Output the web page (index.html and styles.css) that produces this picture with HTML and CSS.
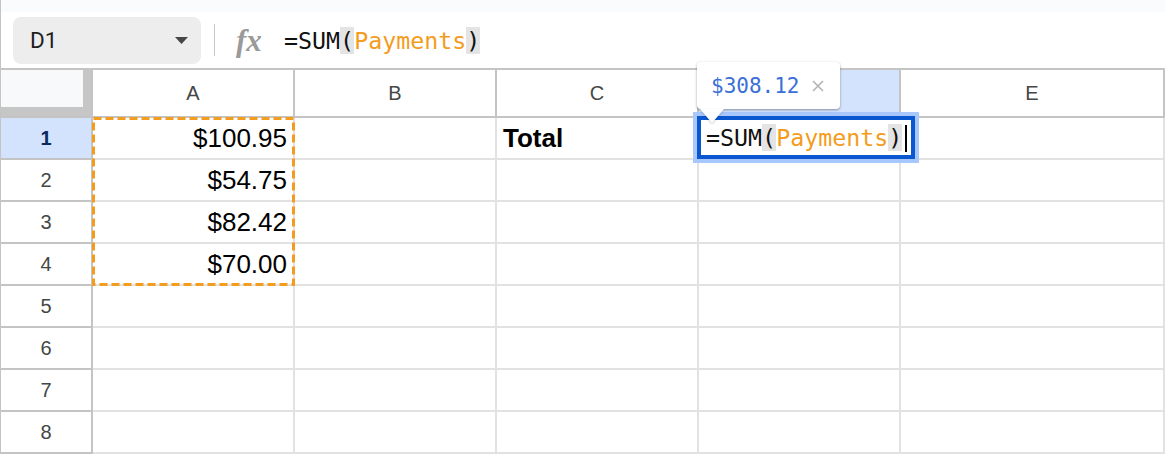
FILE: index.html
```html
<!DOCTYPE html>
<html>
<head>
<meta charset="utf-8">
<link rel="stylesheet" href="styles.css">
</head>
<body>
<div class="app">
  <div class="topstrip"></div>
  <div class="toolbar">
    <div class="namebox">
      <span class="ref">D1</span>
      <svg class="caret" width="13" height="7" viewBox="0 0 13 7"><path d="M0 0h13L6.5 7z" fill="#444746"/></svg>
    </div>
    <div class="sep"></div>
    <span class="fx">fx</span>
    <div class="formula"><span>=SUM</span><span class="paren">(</span><span class="rng">Payments</span><span class="paren">)</span></div>
  </div>
  <div class="sheet">
    <div class="grid">
      <div class="corner"><div class="corner-inner"></div></div>
      <div class="colhead">A</div>
      <div class="colhead">B</div>
      <div class="colhead">C</div>
      <div class="colhead active"></div>
      <div class="colhead">E</div>

      <div class="rowhead active">1</div>
      <div class="cell num">$100.95</div>
      <div class="cell"></div>
      <div class="cell bold">Total</div>
      <div class="cell"></div>
      <div class="cell"></div>

      <div class="rowhead">2</div>
      <div class="cell num">$54.75</div>
      <div class="cell"></div>
      <div class="cell"></div>
      <div class="cell"></div>
      <div class="cell"></div>

      <div class="rowhead">3</div>
      <div class="cell num">$82.42</div>
      <div class="cell"></div>
      <div class="cell"></div>
      <div class="cell"></div>
      <div class="cell"></div>

      <div class="rowhead">4</div>
      <div class="cell num">$70.00</div>
      <div class="cell"></div>
      <div class="cell"></div>
      <div class="cell"></div>
      <div class="cell"></div>

      <div class="rowhead">5</div>
      <div class="cell"></div>
      <div class="cell"></div>
      <div class="cell"></div>
      <div class="cell"></div>
      <div class="cell"></div>

      <div class="rowhead">6</div>
      <div class="cell"></div>
      <div class="cell"></div>
      <div class="cell"></div>
      <div class="cell"></div>
      <div class="cell"></div>

      <div class="rowhead">7</div>
      <div class="cell"></div>
      <div class="cell"></div>
      <div class="cell"></div>
      <div class="cell"></div>
      <div class="cell"></div>

      <div class="rowhead">8</div>
      <div class="cell"></div>
      <div class="cell"></div>
      <div class="cell"></div>
      <div class="cell"></div>
      <div class="cell"></div>
    </div>

    <svg class="range" width="203" height="169" viewBox="0 0 203 169">
      <rect x="1.5" y="1.5" width="200" height="166" fill="none" stroke="#f39c1e" stroke-width="3" stroke-dasharray="8 4"/>
    </svg>

    <div class="editor"><span>=SUM</span><span class="paren">(</span><span class="rng">Payments</span><span class="paren">)</span><span class="cursor"></span></div>

    <div class="tooltip">
      <span class="val">$308.12</span>
      <svg class="close" width="12" height="12" viewBox="0 0 12 12"><path d="M1 1L11 11M11 1L1 11" stroke="#b4b4b4" stroke-width="1.6"/></svg>
    </div>
  </div>
</div>
</body>
</html>
```

FILE: styles.css
```css
html, body {
  margin: 0;
  padding: 0;
  background: #ffffff;
}

.app {
  width: 1164px;
  height: 454px;
  border-left: 1px solid #c4c4c4;
  overflow: hidden;
  font-family: "Liberation Sans", Arial, sans-serif;
}

.topstrip {
  height: 12px;
  background: #f9fbfd;
}

.toolbar {
  height: 56px;
  display: flex;
  align-items: center;
  padding-left: 12px;
  box-sizing: border-box;
}

.namebox {
  width: 188px;
  height: 47px;
  border-radius: 8px;
  background: #ededed;
  display: flex;
  align-items: center;
  justify-content: space-between;
  padding: 0 13px 0 17px;
  box-sizing: border-box;
}

.ref {
  font-family: Roboto, "Liberation Sans", sans-serif;
  font-size: 22.5px;
  color: #1f1f1f;
}

.caret {
  display: block;
}

.sep {
  width: 1px;
  height: 32px;
  background: #c8c8c8;
  margin-left: 13px;
}

.fx {
  margin-left: 21px;
  width: 30px;
  font-family: "Liberation Serif", serif;
  font-style: italic;
  font-weight: bold;
  font-size: 31px;
  color: #9a9a9a;
  letter-spacing: 0;
  line-height: 1;
}

.formula {
  margin-left: 18px;
  font-family: "DejaVu Sans Mono", monospace;
  font-size: 23.3px;
  color: #111111;
  line-height: 27px;
}

.paren {
  background: #e4e4e4;
}

.rng {
  color: #f39c1e;
}

.sheet {
  position: relative;
  border-top: 2px solid #c4c4c4;
}

.grid {
  display: grid;
  grid-template-columns: 92px 202px 202px 202px 202px 1fr;
  grid-template-rows: 48px repeat(8, 42px);
}

.grid > div {
  box-sizing: border-box;
}

.corner {
  background: #c6c6c6;
  border-right: 2px solid #c4c4c4;
  border-bottom: 2px solid #c4c4c4;
}

.corner-inner {
  width: 82px;
  height: 37px;
  background: #f8f9fa;
}

.colhead {
  border-right: 2px solid #c4c4c4;
  border-bottom: 2px solid #c4c4c4;
  display: flex;
  align-items: center;
  justify-content: center;
  font-size: 20px;
  color: #444746;
}

.colhead.active {
  background: #d3e3fd;
}

.rowhead {
  border-right: 2px solid #c4c4c4;
  border-bottom: 2px solid #c4c4c4;
  display: flex;
  align-items: center;
  justify-content: center;
  font-size: 20px;
  color: #444746;
}

.rowhead.active {
  background: #d3e3fd;
  color: #0b2a5e;
  font-weight: bold;
}

.cell {
  border-right: 2px solid #e2e2e2;
  border-bottom: 2px solid #e2e2e2;
  font-size: 26px;
  line-height: 40px;
  color: #000000;
  padding: 0 6px;
  white-space: nowrap;
}

.cell.num {
  text-align: right;
}

.cell.bold {
  font-weight: bold;
}

.range {
  position: absolute;
  left: 91px;
  top: 47px;
}

.editor {
  position: absolute;
  left: 696px;
  top: 46px;
  width: 218px;
  height: 43px;
  box-sizing: border-box;
  border: 4px solid #0b57d0;
  box-shadow: 0 0 0 4px #a8c7fa;
  background: #ffffff;
  padding: 4px 0 0 5px;
  font-family: "DejaVu Sans Mono", monospace;
  font-size: 23.3px;
  line-height: 28px;
  color: #111111;
  white-space: nowrap;
}

.cursor {
  display: inline-block;
  width: 2px;
  height: 27px;
  background: #000000;
  vertical-align: -6px;
  margin-left: 3px;
}

.tooltip {
  position: absolute;
  left: 696px;
  top: -8px;
  width: 143px;
  height: 47px;
  box-sizing: border-box;
  background: #ffffff;
  border-radius: 4px;
  box-shadow: 0 1px 3px rgba(0, 0, 0, 0.28), 0 1px 2px rgba(0, 0, 0, 0.12);
  display: flex;
  align-items: center;
  padding-left: 14px;
}

.tooltip::after {
  content: "";
  position: absolute;
  left: 3px;
  top: 47px;
  border-left: 12px solid transparent;
  border-right: 12px solid transparent;
  border-top: 14px solid #ffffff;
  filter: drop-shadow(0 1px 1px rgba(0, 0, 0, 0.2));
}

.val {
  font-family: "DejaVu Sans Mono", monospace;
  font-size: 21px;
  color: #3a6fd8;
}

.close {
  margin-left: 12px;
  display: block;
}
```
